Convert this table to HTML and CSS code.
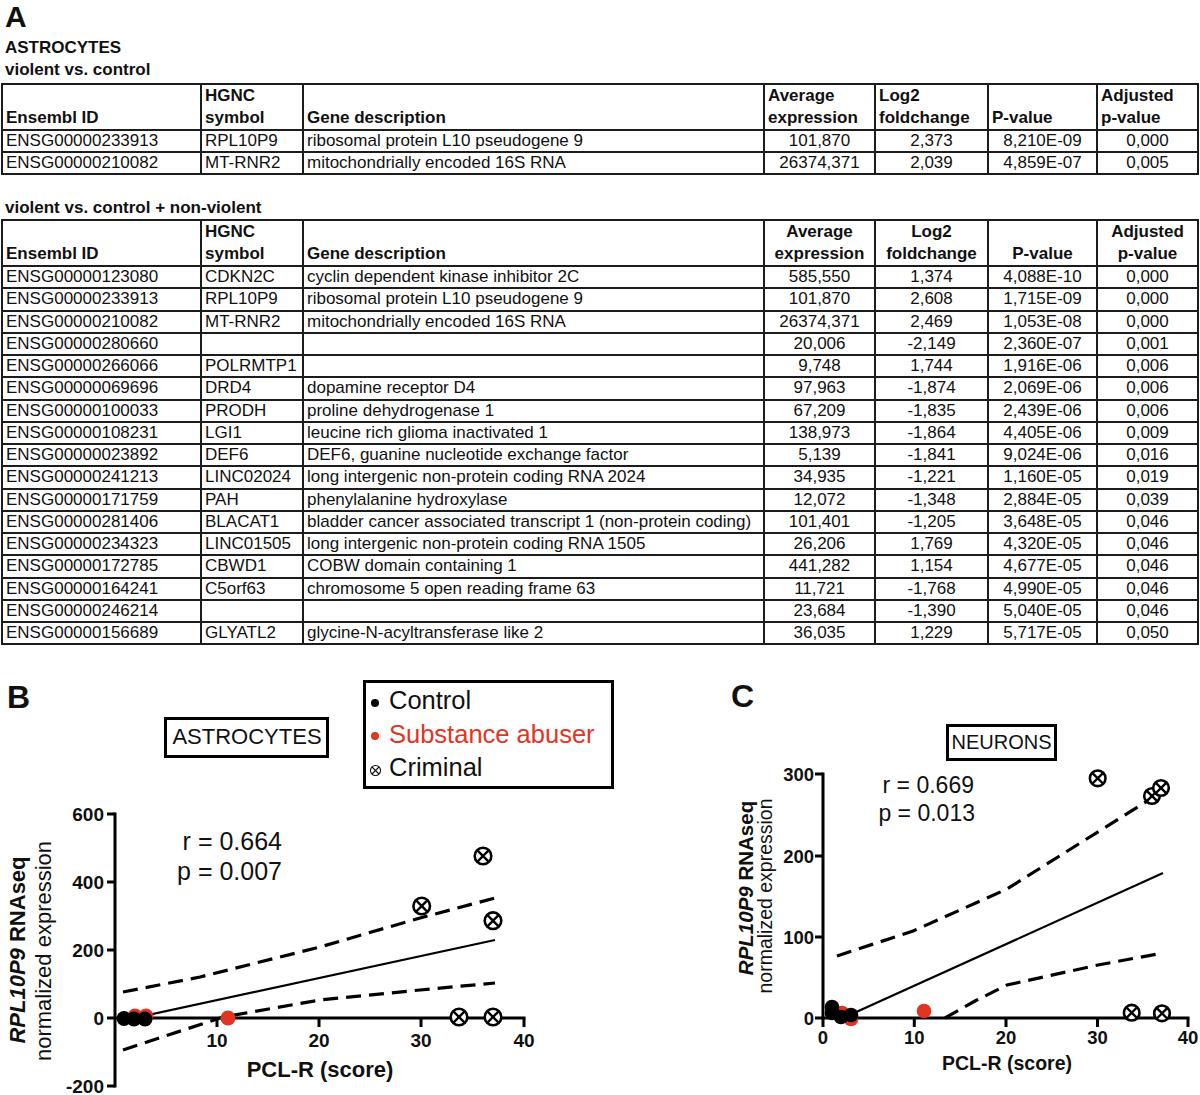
FILE: index.html
```html
<!DOCTYPE html>
<html lang="en">
<head>
<meta charset="utf-8">
<title>RPL10P9 expression</title>
<link rel="stylesheet" href="styles.css">
</head>
<body>
<div class="page">
  <section class="panel-a">
    <div class="panel-label">A</div>
    <div class="subhead first">ASTROCYTES</div>
    <div class="subhead">violent vs. control</div>
    <table class="genes t1">
      <colgroup>
        <col class="w-id"><col class="w-sym"><col class="w-desc"><col class="w-avg"><col class="w-log"><col class="w-p"><col class="w-adj">
      </colgroup>
      <thead>
        <tr><th>Ensembl ID</th><th>HGNC<br>symbol</th><th>Gene description</th><th>Average<br>expression</th><th>Log2<br>foldchange</th><th>P-value</th><th>Adjusted<br>p-value</th></tr>
      </thead>
      <tbody>
        <tr><td>ENSG00000233913</td><td>RPL10P9</td><td>ribosomal protein L10 pseudogene 9</td><td class="num">101,870</td><td class="num">2,373</td><td class="num">8,210E-09</td><td class="num">0,000</td></tr>
        <tr><td>ENSG00000210082</td><td>MT-RNR2</td><td>mitochondrially encoded 16S RNA</td><td class="num">26374,371</td><td class="num">2,039</td><td class="num">4,859E-07</td><td class="num">0,005</td></tr>
      </tbody>
    </table>
    <div class="subhead second">violent vs. control + non-violent</div>
    <table class="genes t2">
      <colgroup>
        <col class="w-id"><col class="w-sym"><col class="w-desc"><col class="w-avg"><col class="w-log"><col class="w-p"><col class="w-adj">
      </colgroup>
      <thead>
        <tr><th>Ensembl ID</th><th>HGNC<br>symbol</th><th>Gene description</th><th class="c">Average<br>expression</th><th class="c">Log2<br>foldchange</th><th class="c">P-value</th><th class="c">Adjusted<br>p-value</th></tr>
      </thead>
      <tbody>
        <tr><td>ENSG00000123080</td><td>CDKN2C</td><td>cyclin dependent kinase inhibitor 2C</td><td class="num">585,550</td><td class="num">1,374</td><td class="num">4,088E-10</td><td class="num">0,000</td></tr>
        <tr><td>ENSG00000233913</td><td>RPL10P9</td><td>ribosomal protein L10 pseudogene 9</td><td class="num">101,870</td><td class="num">2,608</td><td class="num">1,715E-09</td><td class="num">0,000</td></tr>
        <tr><td>ENSG00000210082</td><td>MT-RNR2</td><td>mitochondrially encoded 16S RNA</td><td class="num">26374,371</td><td class="num">2,469</td><td class="num">1,053E-08</td><td class="num">0,000</td></tr>
        <tr><td>ENSG00000280660</td><td></td><td></td><td class="num">20,006</td><td class="num">-2,149</td><td class="num">2,360E-07</td><td class="num">0,001</td></tr>
        <tr><td>ENSG00000266066</td><td>POLRMTP1</td><td></td><td class="num">9,748</td><td class="num">1,744</td><td class="num">1,916E-06</td><td class="num">0,006</td></tr>
        <tr><td>ENSG00000069696</td><td>DRD4</td><td>dopamine receptor D4</td><td class="num">97,963</td><td class="num">-1,874</td><td class="num">2,069E-06</td><td class="num">0,006</td></tr>
        <tr><td>ENSG00000100033</td><td>PRODH</td><td>proline dehydrogenase 1</td><td class="num">67,209</td><td class="num">-1,835</td><td class="num">2,439E-06</td><td class="num">0,006</td></tr>
        <tr><td>ENSG00000108231</td><td>LGI1</td><td>leucine rich glioma inactivated 1</td><td class="num">138,973</td><td class="num">-1,864</td><td class="num">4,405E-06</td><td class="num">0,009</td></tr>
        <tr><td>ENSG00000023892</td><td>DEF6</td><td>DEF6, guanine nucleotide exchange factor</td><td class="num">5,139</td><td class="num">-1,841</td><td class="num">9,024E-06</td><td class="num">0,016</td></tr>
        <tr><td>ENSG00000241213</td><td>LINC02024</td><td>long intergenic non-protein coding RNA 2024</td><td class="num">34,935</td><td class="num">-1,221</td><td class="num">1,160E-05</td><td class="num">0,019</td></tr>
        <tr><td>ENSG00000171759</td><td>PAH</td><td>phenylalanine hydroxylase</td><td class="num">12,072</td><td class="num">-1,348</td><td class="num">2,884E-05</td><td class="num">0,039</td></tr>
        <tr><td>ENSG00000281406</td><td>BLACAT1</td><td>bladder cancer associated transcript 1 (non-protein coding)</td><td class="num">101,401</td><td class="num">-1,205</td><td class="num">3,648E-05</td><td class="num">0,046</td></tr>
        <tr><td>ENSG00000234323</td><td>LINC01505</td><td>long intergenic non-protein coding RNA 1505</td><td class="num">26,206</td><td class="num">1,769</td><td class="num">4,320E-05</td><td class="num">0,046</td></tr>
        <tr><td>ENSG00000172785</td><td>CBWD1</td><td>COBW domain containing 1</td><td class="num">441,282</td><td class="num">1,154</td><td class="num">4,677E-05</td><td class="num">0,046</td></tr>
        <tr><td>ENSG00000164241</td><td>C5orf63</td><td>chromosome 5 open reading frame 63</td><td class="num">11,721</td><td class="num">-1,768</td><td class="num">4,990E-05</td><td class="num">0,046</td></tr>
        <tr><td>ENSG00000246214</td><td></td><td></td><td class="num">23,684</td><td class="num">-1,390</td><td class="num">5,040E-05</td><td class="num">0,046</td></tr>
        <tr><td>ENSG00000156689</td><td>GLYATL2</td><td>glycine-N-acyltransferase like 2</td><td class="num">36,035</td><td class="num">1,229</td><td class="num">5,717E-05</td><td class="num">0,050</td></tr>
      </tbody>
    </table>
  </section>

  <section class="figures">
    <svg class="plot plot-b" width="720" height="450" viewBox="0 645 720 450" xmlns="http://www.w3.org/2000/svg">
      <defs>
        <g id="crimB">
          <circle cx="0" cy="0" r="8.3" class="crim-ring"/>
          <line x1="-5.6" y1="-5.6" x2="5.6" y2="5.6" class="crim-x"/>
          <line x1="-5.6" y1="5.6" x2="5.6" y2="-5.6" class="crim-x"/>
        </g>
      </defs>
      <text class="panel-letter" x="7" y="708">B</text>

      <rect class="title-box" x="165.5" y="718.5" width="162" height="38"/>
      <text class="box-title" x="247" y="744" text-anchor="middle">ASTROCYTES</text>

      <rect class="title-box" x="364.5" y="681.5" width="248" height="106"/>
      <circle cx="375" cy="703" r="4" class="dot-black"/>
      <text class="legend-text" x="389" y="709">Control</text>
      <circle cx="375" cy="736" r="4" class="dot-red"/>
      <text class="legend-text red" x="389" y="743">Substance abuser</text>
      <circle cx="375.5" cy="770.5" r="5" class="leg-crim"/>
      <line x1="372" y1="767" x2="379" y2="774" class="leg-crim-x"/>
      <line x1="372" y1="774" x2="379" y2="767" class="leg-crim-x"/>
      <text class="legend-text" x="389" y="776">Criminal</text>

      <line class="axis" x1="115" y1="812.5" x2="115" y2="1087.5"/>
      <line class="axis" x1="107" y1="814" x2="115" y2="814"/>
      <line class="axis" x1="107" y1="882" x2="115" y2="882"/>
      <line class="axis" x1="107" y1="950" x2="115" y2="950"/>
      <line class="axis" x1="107" y1="1018" x2="115" y2="1018"/>
      <line class="axis" x1="107" y1="1086" x2="115" y2="1086"/>
      <text class="tick" x="104" y="821" text-anchor="end">600</text>
      <text class="tick" x="104" y="889" text-anchor="end">400</text>
      <text class="tick" x="104" y="957" text-anchor="end">200</text>
      <text class="tick" x="104" y="1025" text-anchor="end">0</text>
      <text class="tick" x="104" y="1093" text-anchor="end">-200</text>

      <line class="axis" x1="115" y1="1018" x2="525.5" y2="1018"/>
      <line class="axis" x1="217" y1="1018" x2="217" y2="1027"/>
      <line class="axis" x1="319" y1="1018" x2="319" y2="1027"/>
      <line class="axis" x1="421" y1="1018" x2="421" y2="1027"/>
      <line class="axis" x1="524" y1="1018" x2="524" y2="1027"/>
      <text class="tick" x="217" y="1047" text-anchor="middle">10</text>
      <text class="tick" x="319" y="1047" text-anchor="middle">20</text>
      <text class="tick" x="421" y="1047" text-anchor="middle">30</text>
      <text class="tick" x="524" y="1047" text-anchor="middle">40</text>

      <text class="axis-title" x="320" y="1077" text-anchor="middle">PCL-R (score)</text>
      <text class="ylab-bold" transform="rotate(-90)" x="-950" y="25" text-anchor="middle"><tspan class="ital">RPL10P9</tspan> RNAseq</text>
      <text class="ylab" transform="rotate(-90)" x="-951" y="51" text-anchor="middle">normalized expression</text>

      <text class="stat" x="282" y="850" text-anchor="end">r = 0.664</text>
      <text class="stat" x="282" y="880" text-anchor="end">p = 0.007</text>

      <polyline class="ci" points="123,992 200,977 320,947 420,918 495,898"/>
      <polyline class="ci" points="123,1050 223,1017 320,1000 420,990 495,983"/>
      <line class="fit" x1="125" y1="1020" x2="495" y2="940"/>

      <circle cx="135" cy="1016" r="7.5" class="dot-red"/>
      <circle cx="146" cy="1016" r="7.5" class="dot-red"/>
      <circle cx="228" cy="1018" r="7.5" class="dot-red"/>
      <circle cx="124" cy="1018.5" r="7.5" class="dot-black"/>
      <circle cx="134" cy="1019" r="7.5" class="dot-black"/>
      <circle cx="145" cy="1019" r="7.5" class="dot-black"/>
      <use href="#crimB" x="421.7" y="906"/>
      <use href="#crimB" x="483" y="856"/>
      <use href="#crimB" x="493" y="920.7"/>
      <use href="#crimB" x="459" y="1017"/>
      <use href="#crimB" x="493" y="1017"/>
    </svg>

    <svg class="plot plot-c" width="480" height="450" viewBox="720 645 480 450" xmlns="http://www.w3.org/2000/svg">
      <defs>
        <g id="crimC">
          <circle cx="0" cy="0" r="7.8" class="crim-ring"/>
          <line x1="-5.2" y1="-5.2" x2="5.2" y2="5.2" class="crim-x"/>
          <line x1="-5.2" y1="5.2" x2="5.2" y2="-5.2" class="crim-x"/>
        </g>
      </defs>
      <text class="panel-letter" x="731" y="707">C</text>

      <rect class="title-box" x="947.5" y="725.5" width="108" height="34"/>
      <text class="box-title small" x="1001.5" y="749" text-anchor="middle">NEURONS</text>

      <line class="axis" x1="823" y1="772.5" x2="823" y2="1019.5"/>
      <line class="axis" x1="815" y1="774" x2="823" y2="774"/>
      <line class="axis" x1="815" y1="856" x2="823" y2="856"/>
      <line class="axis" x1="815" y1="937" x2="823" y2="937"/>
      <line class="axis" x1="815" y1="1018" x2="823" y2="1018"/>
      <text class="tick c" x="814" y="781" text-anchor="end">300</text>
      <text class="tick c" x="814" y="863" text-anchor="end">200</text>
      <text class="tick c" x="814" y="944" text-anchor="end">100</text>
      <text class="tick c" x="814" y="1025" text-anchor="end">0</text>

      <line class="axis" x1="821.5" y1="1018" x2="1189.5" y2="1018"/>
      <line class="axis" x1="823" y1="1018" x2="823" y2="1027"/>
      <line class="axis" x1="914.3" y1="1018" x2="914.3" y2="1027"/>
      <line class="axis" x1="1006" y1="1018" x2="1006" y2="1027"/>
      <line class="axis" x1="1097.5" y1="1018" x2="1097.5" y2="1027"/>
      <line class="axis" x1="1188" y1="1018" x2="1188" y2="1027"/>
      <text class="tick c" x="823" y="1044" text-anchor="middle">0</text>
      <text class="tick c" x="914.3" y="1044" text-anchor="middle">10</text>
      <text class="tick c" x="1006" y="1044" text-anchor="middle">20</text>
      <text class="tick c" x="1097.5" y="1044" text-anchor="middle">30</text>
      <text class="tick c" x="1188" y="1044" text-anchor="middle">40</text>

      <text class="axis-title c" x="1007" y="1070" text-anchor="middle">PCL-R (score)</text>
      <text class="ylab-bold c" transform="rotate(-90)" x="-888" y="753" text-anchor="middle"><tspan class="ital">RPL10P9</tspan> RNAseq</text>
      <text class="ylab c" transform="rotate(-90)" x="-896" y="772" text-anchor="middle">normalized expression</text>

      <text class="stat c" x="974" y="793" text-anchor="end">r = 0.669</text>
      <text class="stat c" x="975" y="821" text-anchor="end">p = 0.013</text>

      <polyline class="ci" points="837,956 913,931 1007,889 1085,840 1160,793"/>
      <polyline class="ci" points="945,1018 975,1001 1007,985 1098,965 1163,953"/>
      <line class="fit" x1="843" y1="1018" x2="1163" y2="873"/>

      <circle cx="842" cy="1013" r="7.3" class="dot-red"/>
      <circle cx="851" cy="1019" r="7.3" class="dot-red"/>
      <circle cx="924" cy="1011" r="7.3" class="dot-red"/>
      <circle cx="832" cy="1007" r="7.3" class="dot-black"/>
      <circle cx="832" cy="1013" r="7.3" class="dot-black"/>
      <circle cx="841" cy="1017" r="7.3" class="dot-black"/>
      <circle cx="851" cy="1015" r="7.3" class="dot-black"/>
      <use href="#crimC" x="1097.7" y="778.3"/>
      <use href="#crimC" x="1152" y="796"/>
      <use href="#crimC" x="1161" y="788"/>
      <use href="#crimC" x="1131.7" y="1012.7"/>
      <use href="#crimC" x="1162" y="1013.3"/>
    </svg>
  </section>
</div>
</body>
</html>
```

FILE: styles.css
```css
html, body {
  margin: 0;
  padding: 0;
  background: #ffffff;
}

body {
  font-family: "Liberation Sans", Arial, sans-serif;
  color: #111111;
}

.page {
  width: 1200px;
  height: 1095px;
  overflow: hidden;
}

.panel-label {
  font-size: 30px;
  font-weight: bold;
  line-height: 34px;
  padding-left: 5px;
}

.subhead {
  font-size: 17px;
  font-weight: bold;
  line-height: 22px;
  padding-left: 5px;
}

.subhead.first {
  margin-top: 3px;
}

.subhead.second {
  margin-top: 22px;
}

.genes {
  border-collapse: collapse;
  table-layout: fixed;
  width: 1198px;
  margin-left: 1px;
  font-size: 17px;
}

.t1 {
  margin-top: 2px;
}

.w-id { width: 199px; }
.w-sym { width: 102px; }
.w-desc { width: 461px; }
.w-avg { width: 111px; }
.w-log { width: 113px; }
.w-p { width: 109px; }
.w-adj { width: 101px; }

.genes th,
.genes td {
  border: 2px solid #1c1c1c;
  padding: 0 3px;
  white-space: nowrap;
  overflow: visible;
}

.genes th {
  font-weight: bold;
  text-align: left;
  vertical-align: bottom;
  line-height: 22px;
  padding-bottom: 0;
}

.t1 thead th {
  height: 42px;
}

.t2 thead th {
  height: 43px;
}

.t2 thead th.c {
  text-align: center;
}

.genes td {
  height: 20px;
  line-height: 20px;
  vertical-align: middle;
}

.t2 td {
  height: 20.25px;
}

.genes td.num {
  text-align: center;
}

.figures {
  display: flex;
  flex-direction: row;
}

.plot {
  display: block;
  flex: none;
  overflow: hidden;
}

.plot text {
  font-family: "Liberation Sans", Arial, sans-serif;
  fill: #111111;
}

.panel-letter {
  font-size: 32px;
  font-weight: bold;
}

.title-box {
  fill: #ffffff;
  stroke: #000000;
  stroke-width: 3;
}

.box-title {
  font-size: 22px;
}

.box-title.small {
  font-size: 20px;
}

.legend-text {
  font-size: 25.5px;
}

.plot .legend-text.red {
  fill: #e2341e;
}

.dot-black {
  fill: #000000;
}

.dot-red {
  fill: #e2341e;
}

.leg-crim {
  fill: none;
  stroke: #111111;
  stroke-width: 1.1;
}

.leg-crim-x {
  stroke: #111111;
  stroke-width: 1.1;
}

.crim-ring {
  fill: #ffffff;
  stroke: #000000;
  stroke-width: 2.6;
}

.crim-x {
  stroke: #000000;
  stroke-width: 2.4;
}

.axis {
  stroke: #000000;
  stroke-width: 3;
}

.tick {
  font-size: 19px;
  font-weight: bold;
}

.tick.c {
  font-size: 18.5px;
}

.axis-title {
  font-size: 22px;
  font-weight: bold;
}

.axis-title.c {
  font-size: 19.5px;
}

.ylab-bold {
  font-size: 22px;
  font-weight: bold;
}

.ylab-bold.c {
  font-size: 20.5px;
}

.ital {
  font-style: italic;
}

.ylab {
  font-size: 22px;
}

.ylab.c {
  font-size: 19.5px;
}

.stat {
  font-size: 25px;
}

.stat.c {
  font-size: 23px;
}

.ci {
  fill: none;
  stroke: #000000;
  stroke-width: 3.2;
  stroke-dasharray: 15 8;
}

.fit {
  stroke: #000000;
  stroke-width: 2.2;
}
```
